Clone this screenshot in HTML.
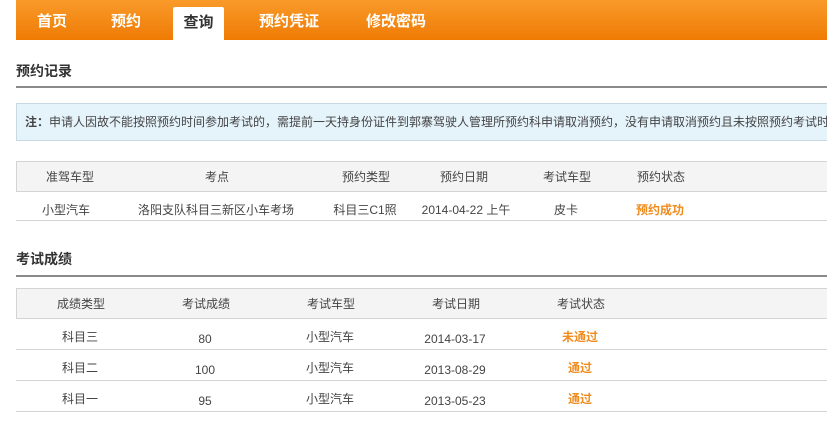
<!DOCTYPE html>
<html><head><meta charset="utf-8">
<style>
*{margin:0;padding:0;box-sizing:border-box}
body{width:827px;height:426px;overflow:hidden;background:#fff;font-family:"Liberation Sans","Noto Sans CJK SC","WenQuanYi Zen Hei",sans-serif;color:#444;font-size:12px;position:relative}
.hdr{position:absolute;left:16px;top:0;width:811px;height:40px;background:linear-gradient(#f99a2a,#ef7b04)}
.tab{position:absolute;top:0;height:40px;line-height:44px;color:#fff;font-weight:bold;font-size:15px;white-space:nowrap;transform:translateX(-50%)}
.act{position:absolute;left:173px;top:7px;width:51px;height:33px;background:#fff;border-radius:2px 2px 0 0;color:#333;font-weight:bold;font-size:15px;text-align:center;line-height:31px}
.ttl{position:absolute;left:16px;font-size:14px;font-weight:bold;color:#333}
.ln{position:absolute;left:16px;width:811px;height:2px;background:#8a8a8a}
.note{position:absolute;left:16px;top:103px;width:815px;height:38px;background:#e5f3fb;border:1px solid #c9d9e3;line-height:36px;padding-left:8px;white-space:nowrap;overflow:hidden;font-size:12px;color:#444}
.row{position:absolute;left:16px;width:811px;border-bottom:1px solid #d4d4d4}
.hd{background:#f4f4f4;border-top:1px solid #d4d4d4;border-left:1px solid #d4d4d4}
.c{position:absolute;top:0;transform:translateX(-50%);white-space:nowrap;font-size:12px;color:#444}
.o{color:#f08c1e;font-weight:bold}
</style></head><body>
<div class="hdr"></div>
<div class="tab" style="left:52px">首页</div>
<div class="tab" style="left:126px">预约</div>
<div class="act">查询</div>
<div class="tab" style="left:289px">预约凭证</div>
<div class="tab" style="left:396px">修改密码</div>

<div class="ttl" style="top:61px">预约记录</div>
<div class="ln" style="top:86px"></div>
<div class="note"><b>注：</b>申请人因故不能按照预约时间参加考试的，需提前一天持身份证件到郭寨驾驶人管理所预约科申请取消预约，没有申请取消预约且未按照预约考试时间参加考试的</div>

<div class="row hd" style="top:161px;height:31px;line-height:30px">
<span class="c" style="left:53px">准驾车型</span><span class="c" style="left:200px">考点</span><span class="c" style="left:349px">预约类型</span><span class="c" style="left:447px">预约日期</span><span class="c" style="left:550px">考试车型</span><span class="c" style="left:644px">预约状态</span></div>
<div class="row" style="top:192px;height:29px;line-height:36px">
<span class="c" style="left:50px">小型汽车</span><span class="c" style="left:200px">洛阳支队科目三新区小车考场</span><span class="c" style="left:349px">科目三C1照</span><span class="c" style="left:450px">2014-04-22 上午</span><span class="c" style="left:550px">皮卡</span><span class="c o" style="left:644px">预约成功</span></div>

<div class="ttl" style="top:249px">考试成绩</div>
<div class="ln" style="top:275px"></div>

<div class="row hd" style="top:288px;height:31px;line-height:31px">
<span class="c" style="left:64px">成绩类型</span><span class="c" style="left:189px">考试成绩</span><span class="c" style="left:314px">考试车型</span><span class="c" style="left:439px">考试日期</span><span class="c" style="left:564px">考试状态</span></div>
<div class="row" style="top:319px;height:31px;line-height:36px">
<span class="c" style="left:64px">科目三</span><span class="c" style="left:189px;top:2px">80</span><span class="c" style="left:314px">小型汽车</span><span class="c" style="left:439px;top:2px">2014-03-17</span><span class="c o" style="left:564px">未通过</span></div>
<div class="row" style="top:350px;height:31px;line-height:36px">
<span class="c" style="left:64px">科目二</span><span class="c" style="left:189px;top:2px">100</span><span class="c" style="left:314px">小型汽车</span><span class="c" style="left:439px;top:2px">2013-08-29</span><span class="c o" style="left:564px">通过</span></div>
<div class="row" style="top:381px;height:31px;line-height:36px">
<span class="c" style="left:64px">科目一</span><span class="c" style="left:189px;top:2px">95</span><span class="c" style="left:314px">小型汽车</span><span class="c" style="left:439px;top:2px">2013-05-23</span><span class="c o" style="left:564px">通过</span></div>
</body></html>
